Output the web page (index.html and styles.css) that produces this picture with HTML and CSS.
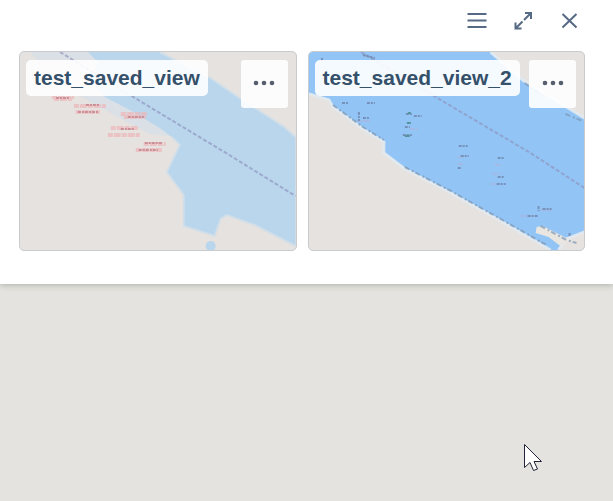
FILE: index.html
```html
<!DOCTYPE html>
<html lang="en">
<head>
    <meta charset="UTF-8">
    <meta name="viewport" content="width=device-width, initial-scale=1.0">
    <title>Saved Views</title>
    <link rel="stylesheet" href="styles.css">
</head>
<body>
    <section class="panel">
        <header class="toolbar">
            <button class="tool" type="button" aria-label="Menu">
                <svg width="20" height="20" viewBox="0 0 20 20"><path d="M.5 4h19M.5 10.500h19M.5 17h19"/></svg>
            </button>
            <button class="tool" type="button" aria-label="Expand">
                <svg width="20" height="20" viewBox="0 0 20 20"><path d="M12 3h6v6M18 3l-7 7M8.500 18.500h-6v-6M2.500 18.500l7-7"/></svg>
            </button>
            <button class="tool" type="button" aria-label="Close">
                <svg width="20" height="20" viewBox="0 0 20 20"><path d="M3.500 4l14 13.500M17.500 4l-14 13.500"/></svg>
            </button>
        </header>

        <div class="views">
            <article class="card">
                <svg class="thumb" viewBox="0 0 276 198" preserveAspectRatio="none" aria-hidden="true">
                    <path class="haze" d="M10 0H80L120 30L150 84L130 82L96 64L60 44L30 22Z"/>
                    <path class="water pale" d="M68 0H140L191 26L220 46L265 75L276 85V194L235 173L207 163L201 167L195 184L164 174L164 143L147 120L160 93L152 85L140 76L110 58L85 45L72 30L78 10Z"/>
                    <circle class="water pale" cx="191" cy="194" r="5"/>
                    <path class="shore pale-shore" d="M140 0L191 26L220 46L265 75L276 85M276 194L235 173L207 163L201 167L195 184L164 174L164 143L147 120L160 93L152 85"/>
                    <path class="ferry" d="M40 0L130 55L208 102L276 144"/>
                    <g class="names">
                        <path d="M32 45h22M34 47h18M54 54h32M56 60h24M101 62h26M104 65h22M91 76h27M88 83h32M124 92h22M116 98h26"/>
                        <path class="ink" d="M36 46h14M66 53h14M58 60h21M108 65h16M101 77h14M125 91h18M119 98h19"/>
                    </g>
                </svg>
                <div class="card-top">
                    <h2 class="title">test_saved_view</h2>
                    <button class="more" type="button" aria-label="More options">
                        <svg width="22" height="6" viewBox="0 0 22 6"><circle cx="3" cy="3" r="2.300"/><circle cx="11" cy="3" r="2.300"/><circle cx="19" cy="3" r="2.300"/></svg>
                    </button>
                </div>
            </article>

            <article class="card">
                <svg class="thumb" viewBox="0 0 276 198" preserveAspectRatio="none" aria-hidden="true">
                    <path class="water" d="M0 0H182L214 28L276 66V180L258 186L250 198H242L192 168L144 141L96 116L75 100L75 89L54 76L24 54L20 47L0 41Z"/>
                    <path class="shore" d="M182 0L214 28L276 66M0 42L20 48L24 55L54 77L75 90L75 101L96 117L144 142L192 169L242 198M276 180L258 187L250 198"/>
                    <path class="coast" d="M24 53L54 75L75 88M96 115L144 140L192 167L238 193M216 31L235 44M257 62L274 69"/>
                    <path class="land" d="M228 175L234 174L262 188L252 194L240 185L227 181Z"/>
                    <path class="coast" d="M232 174L258 188L268 191"/>
                    <path class="ferry" d="M52 0L137 51L222 101L276 136"/>
                    <g class="names">
                        <path d="M149 105h7M149 112h6M186 113h7M184 122h8M182 132h10M212 164h13M232 158h12M101 77h8M48 69h14M240 199h14"/>
                        <path class="ink" d="M13 6v4M54 3l12 3M33 51h7M58 51h8M50 60v9M54 66h6M97 62h7M105 64h8M96 75h5M94 83h9M150 94h9M152 104h8M149 116h4M189 106h7M189 125h7M188 132h9M219 164h10M230 154v5M234 157h9M261 181v4"/>
                        <path class="green" d="M99 61h3M98 71h4M96 84h5"/>
                    </g>
                </svg>
                <div class="card-top">
                    <h2 class="title">test_saved_view_2</h2>
                    <button class="more" type="button" aria-label="More options">
                        <svg width="22" height="6" viewBox="0 0 22 6"><circle cx="3" cy="3" r="2.300"/><circle cx="11" cy="3" r="2.300"/><circle cx="19" cy="3" r="2.300"/></svg>
                    </button>
                </div>
            </article>
        </div>
    </section>

    <main class="map">
        <svg class="cursor" width="20" height="28" viewBox="0 0 20 28" aria-hidden="true">
            <path d="M.5 .5V23.500L6 18.500L9.500 26.500L13.500 25L10 17.500H17.500Z"/>
        </svg>
    </main>
</body>
</html>
```

FILE: styles.css
```css
* {
    margin: 0;
    padding: 0;
    box-sizing: border-box;
}

body {
    display: flex;
    flex-direction: column;
    min-height: 100vh;
    font-family: "Liberation Sans", Arial, sans-serif;
    background-color: #e4e3df;
    color: #34506a;
}

button {
    border: none;
    cursor: pointer;
}

/* Saved views panel */
.panel {
    position: relative;
    padding: 0 28px 33px 19px;
    background-color: #fff;
    box-shadow: 0 1px 6px rgba(70, 80, 60, 0.35);
}

.toolbar {
    display: flex;
    justify-content: flex-end;
    gap: 16px;
    padding: 5px 1px 16px 0;
}

.tool {
    display: flex;
    align-items: center;
    justify-content: center;
    width: 30px;
    height: 30px;
    background: none;
}

.tool svg {
    fill: none;
    stroke: #566985;
    stroke-width: 2;
}

.views {
    display: grid;
    grid-template-columns: 1fr 1fr;
    gap: 11px;
}

.card {
    position: relative;
    height: 200px;
    border: 1px solid #c9cccf;
    border-radius: 5px;
    background-color: #e5e2df;
    overflow: hidden;
}

.card-top {
    position: relative;
    display: flex;
    justify-content: space-between;
    align-items: flex-start;
    padding: 8px 8px 0 6px;
}

.title {
    padding: 0 8px;
    border-radius: 5px;
    background-color: rgba(255, 255, 255, 0.9);
    font-size: 21px;
    font-weight: bold;
    line-height: 36px;
}

.more {
    display: flex;
    align-items: center;
    justify-content: center;
    width: 47px;
    height: 48px;
    padding-bottom: 2px;
    border-radius: 3px;
    background-color: rgba(255, 255, 255, 0.9);
}

.more svg {
    fill: #555f6d;
}

/* Map thumbnails, behind the card controls */
.thumb {
    position: absolute;
    top: 0;
    left: 0;
    width: 100%;
    height: 100%;
    fill: none;
}

.water {
    fill: #92c5f6;
}

.water.pale {
    fill: #b9d6ed;
}

.haze {
    fill: #d7e0e7;
    opacity: 0.8;
}

.land {
    fill: #e9e5e0;
}

.shore {
    stroke: #e2eaf0;
    stroke-width: 3;
    opacity: 0.9;
}

.pale-shore {
    stroke: #d3dfe8;
    stroke-width: 2;
}

.coast {
    stroke: #7e96b2;
    stroke-width: 2;
    stroke-dasharray: 5 3 2 2;
    opacity: 0.7;
}

.ferry {
    stroke: #8f92bb;
    stroke-width: 2;
    stroke-dasharray: 4 2;
    opacity: 0.65;
}

.names {
    stroke: #eeb9bb;
    stroke-width: 4;
    stroke-dasharray: 5 1 7 1;
    opacity: 0.75;
}

.ink {
    stroke: #c27480;
    stroke-width: 2;
    stroke-dasharray: 3 1 2 1;
}

.card:last-child .names {
    stroke: #a8b5e0;
    stroke-width: 2;
}

.card:last-child .ink {
    stroke: #6d7fa6;
}

.names .green {
    stroke: #3f8583;
}

/* Main map */
.map {
    position: relative;
    flex: 1;
}

.cursor {
    position: absolute;
    top: 160px;
    right: 69px;
    fill: #fff;
    stroke: #22233a;
    stroke-width: 1;
}
```
